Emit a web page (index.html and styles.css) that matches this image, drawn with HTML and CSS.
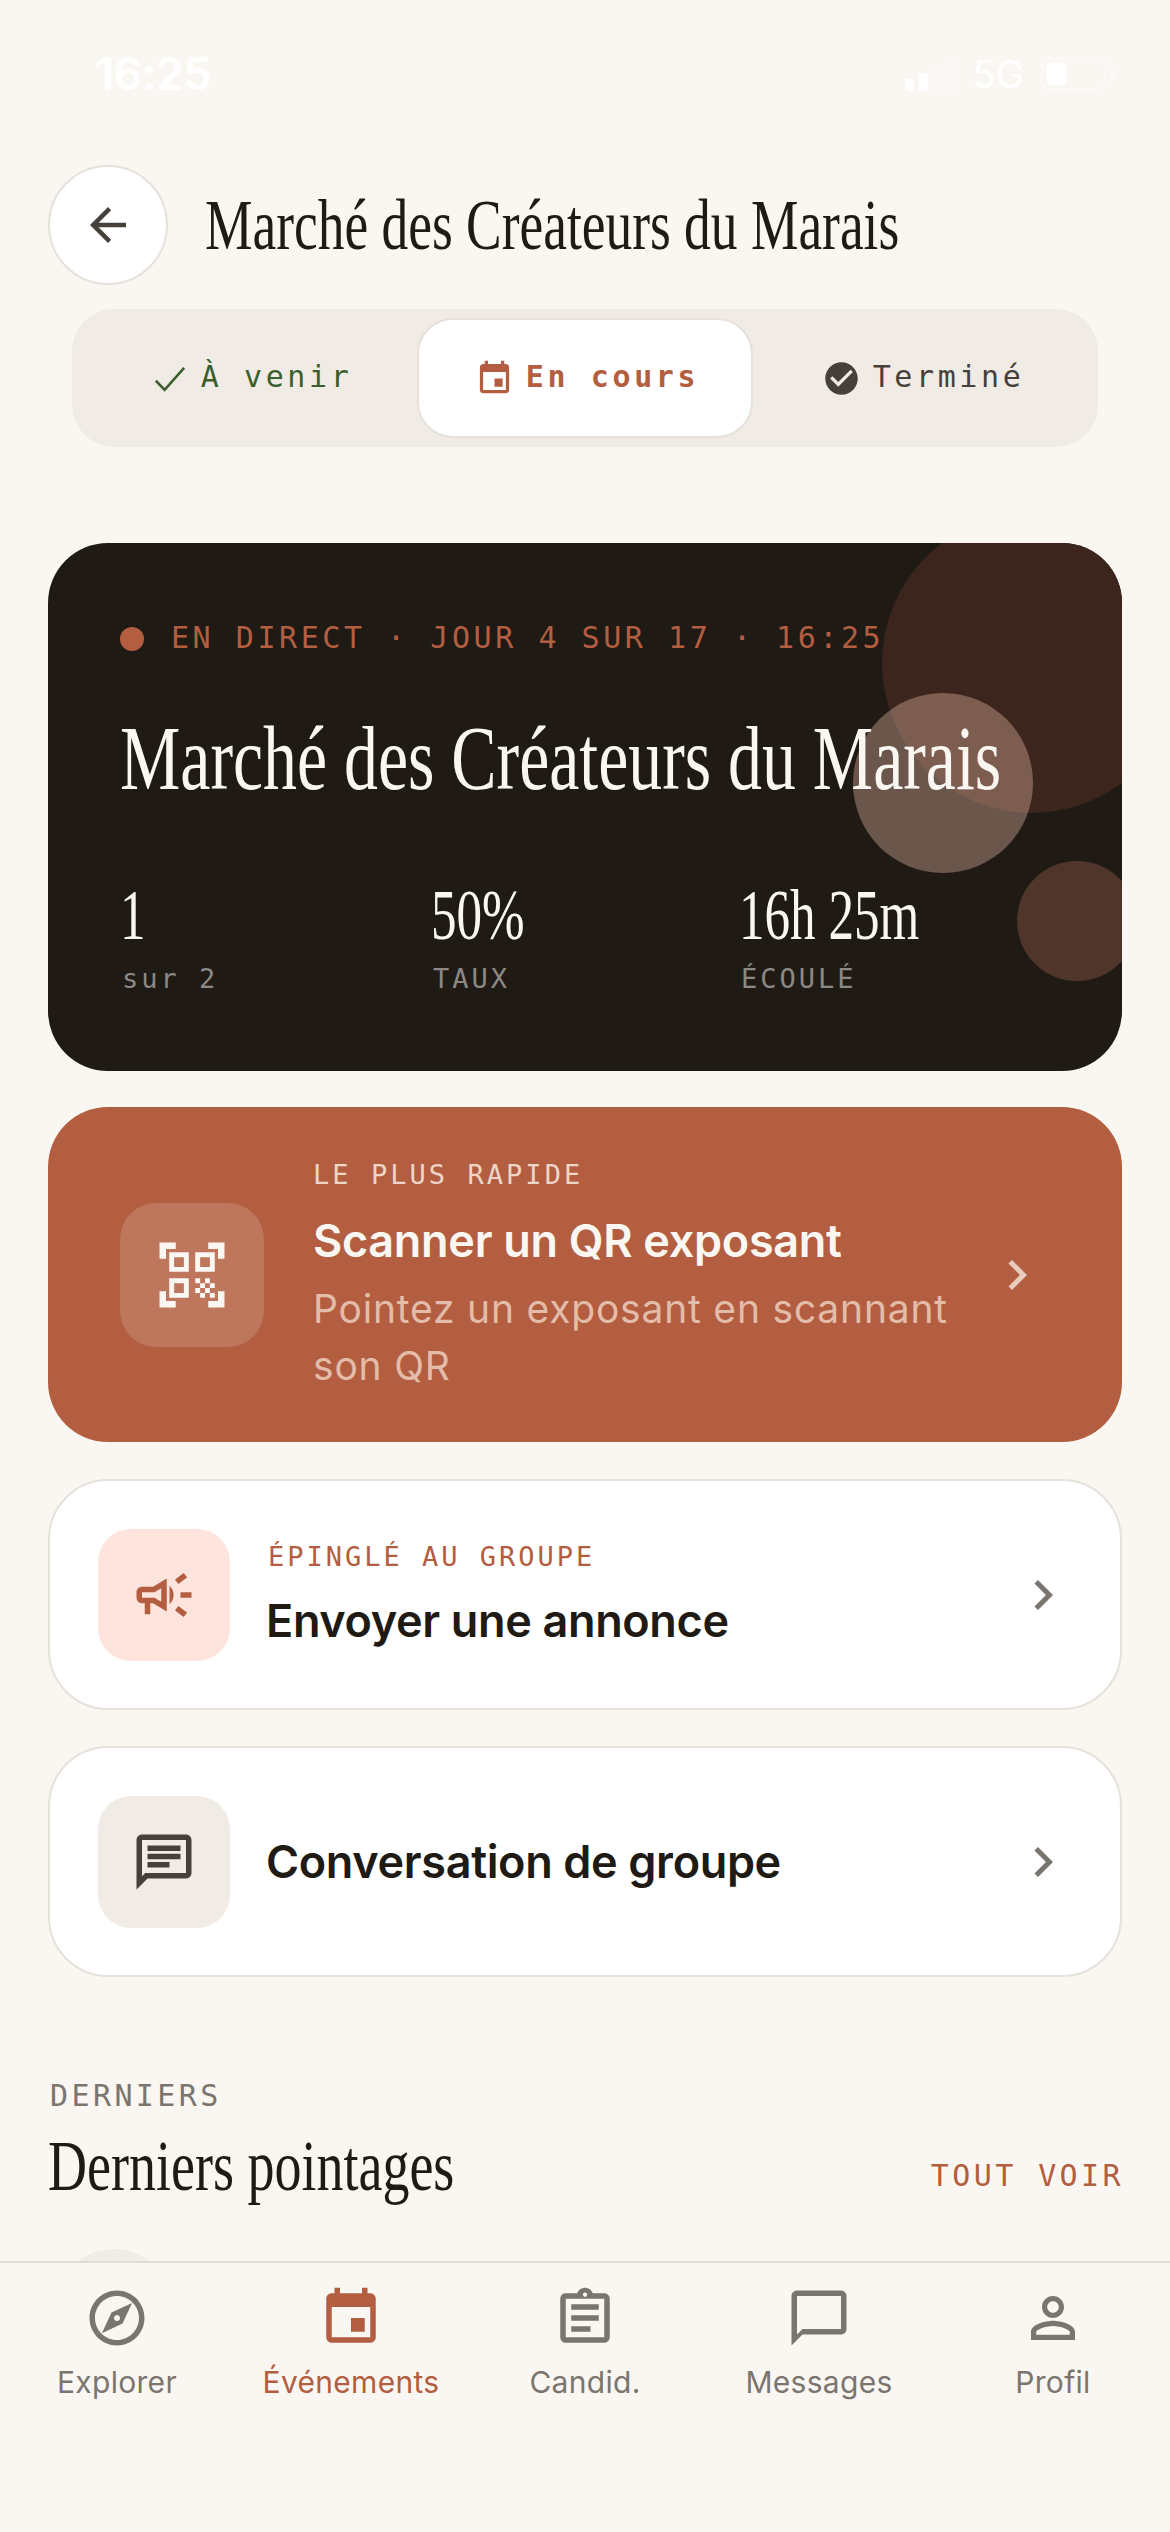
FILE: index.html
```html
<!DOCTYPE html>
<html lang="fr">
<head>
<meta charset="utf-8">
<title>Marché des Créateurs du Marais</title>
<link rel="stylesheet" href="styles.css">
</head>
<body>
<div class="screen">
  <main class="main">
    <div class="status">
      <span class="time">16:25</span>
      <div class="status-right">
        <div class="signal"><i class="b1"></i><i class="b2"></i><i class="b3"></i><i class="b4"></i></div>
        <span class="net">5G</span>
        <div class="battery"><i></i></div>
        <div class="nib"></div>
      </div>
    </div>

    <header class="header">
      <button class="back"><svg class="ic54" viewBox="0 0 24 24"><path d="M20 11H7.83l5.59-5.59L12 4l-8 8 8 8 1.41-1.41L7.83 13H20v-2z"/></svg></button>
      <h1 class="page-title"><span>Marché des Créateurs du Marais</span></h1>
    </header>

    <nav class="segment">
      <div class="seg seg-green"><svg class="ic39" viewBox="0 0 24 24"><path class="thin" d="M3.6 13.4 9 19 21 5.5"/></svg><span>À venir</span></div>
      <div class="seg seg-active"><svg class="ic39" viewBox="0 0 24 24"><path d="M17 12h-5v5h5v-5zM16 1v2H8V1H6v2H5c-1.11 0-1.99.9-1.99 2L3 19c0 1.1.89 2 2 2h14c1.1 0 2-.9 2-2V5c0-1.1-.9-2-2-2h-1V1h-2zm3 18H5V8h14v11z"/></svg><span>En cours</span></div>
      <div class="seg seg-done"><svg class="ic39" viewBox="0 0 24 24"><path d="M12 2C6.48 2 2 6.48 2 12s4.48 10 10 10 10-4.48 10-10S17.52 2 12 2zm-2 15l-5-5 1.41-1.41L10 14.17l7.59-7.59L19 8l-9 9z"/></svg><span>Terminé</span></div>
    </nav>

    <section class="hero">
      <div class="blob blob-a"></div>
      <div class="blob blob-b"></div>
      <div class="blob blob-c"></div>
      <div class="hero-body">
        <div class="live"><i class="dot"></i><span>EN DIRECT · JOUR 4 SUR 17 · 16:25</span></div>
        <h2 class="hero-title"><span>Marché des Créateurs du Marais</span></h2>
        <div class="stats">
          <div><div class="stat-val"><span>1</span></div><div class="stat-lab">sur 2</div></div>
          <div><div class="stat-val"><span>50%</span></div><div class="stat-lab">TAUX</div></div>
          <div><div class="stat-val"><span>16h 25m</span></div><div class="stat-lab">ÉCOULÉ</div></div>
        </div>
      </div>
    </section>

    <a class="scan">
      <div class="scan-tile"><svg class="ic78" viewBox="0 0 24 24"><path d="M9.5 6.5v3h-3v-3h3M11 5H5v6h6V5zm-1.5 9.5v3h-3v-3h3M11 13H5v6h6v-6zm6.5-6.5v3h-3v-3h3M19 5h-6v6h6V5zm-6 8h1.5v1.5H13V13zm1.5 1.5H16V16h-1.5v-1.5zM16 13h1.5v1.5H16V13zm-3 3h1.5v1.5H13V16zm1.5 1.5H16V19h-1.5v-1.5zM16 16h1.5v1.5H16V16zm1.5-1.5H19V16h-1.5v-1.5zm0 3H19V19h-1.5v-1.5zM22 7h-2V4h-3V2h5v5zm0 15v-5h-2v3h-3v2h5zM2 22h5v-2H4v-3H2v5zM2 2v5h2V4h3V2H2z"/></svg></div>
      <div class="scan-text">
        <div class="scan-eyebrow">LE PLUS RAPIDE</div>
        <div class="scan-title">Scanner un QR exposant</div>
        <div class="scan-sub">Pointez un exposant en scannant son QR</div>
      </div>
      <svg class="ic60 chev-light" viewBox="0 0 24 24"><path d="M10 6L8.59 7.41 13.17 12l-4.58 4.59L10 18l6-6z"/></svg>
    </a>

    <a class="card card-pin">
      <div class="tile tile-pink"><svg class="ic66" viewBox="0 0 24 24"><path d="M18 11v2h4v-2h-4zm-2 6.61c.96.71 2.21 1.65 3.2 2.39.4-.53.8-1.07 1.2-1.6-.99-.74-2.24-1.68-3.2-2.4-.4.54-.8 1.08-1.2 1.61zM20.4 5.6c-.4-.53-.8-1.07-1.2-1.6-.99.74-2.24 1.68-3.2 2.4.4.53.8 1.07 1.2 1.6.96-.72 2.21-1.65 3.2-2.4zM4 9c-1.1 0-2 .9-2 2v2c0 1.1.9 2 2 2h1v4h2v-4h1l5 3V6L8 9H4zm5.03 1.71L11 9.53v4.94l-1.97-1.18-.48-.29H4v-2h4.55l.48-.29zM15.5 12c0-1.33-.58-2.53-1.5-3.35v6.69c.92-.81 1.5-2.01 1.5-3.34z"/></svg></div>
      <div class="card-text">
        <div class="card-eyebrow">ÉPINGLÉ AU GROUPE</div>
        <div class="card-title">Envoyer une annonce</div>
      </div>
      <svg class="ic60 chev" viewBox="0 0 24 24"><path d="M10 6L8.59 7.41 13.17 12l-4.58 4.59L10 18l6-6z"/></svg>
    </a>

    <a class="card card-chat">
      <div class="tile tile-sand"><svg class="ic66" viewBox="0 0 24 24"><path d="M20 2H4c-1.1 0-2 .9-2 2v18l4-4h14c1.1 0 2-.9 2-2V4c0-1.1-.9-2-2-2zm0 14H5.17L4 17.17V4h16v12zM6 12h8v2H6zm0-3h12v2H6zm0-3h12v2H6z"/></svg></div>
      <div class="card-text">
        <div class="card-title">Conversation de groupe</div>
      </div>
      <svg class="ic60 chev" viewBox="0 0 24 24"><path d="M10 6L8.59 7.41 13.17 12l-4.58 4.59L10 18l6-6z"/></svg>
    </a>

    <section class="latest">
      <div class="latest-eyebrow">DERNIERS</div>
      <div class="latest-head">
        <h3 class="latest-title"><span>Derniers pointages</span></h3>
        <a class="see-all">TOUT VOIR</a>
      </div>
      <div class="avatar"></div>
    </section>
  </main>

  <footer class="tabbar">
    <div class="tab"><svg class="ic66" viewBox="0 0 24 24"><path d="M12 2C6.48 2 2 6.48 2 12s4.48 10 10 10 10-4.48 10-10S17.52 2 12 2zm0 18c-4.41 0-8-3.59-8-8s3.59-8 8-8 8 3.59 8 8-3.59 8-8 8zm-5.5-2.5l7.51-3.49L17.5 6.5 9.99 9.99 6.5 17.5zm5.5-6.6c.61 0 1.1.49 1.1 1.1s-.49 1.1-1.1 1.1-1.1-.49-1.1-1.1.49-1.1 1.1-1.1z"/></svg><span>Explorer</span></div>
    <div class="tab tab-active"><svg class="ic66" viewBox="0 0 24 24"><path d="M17 12h-5v5h5v-5zM16 1v2H8V1H6v2H5c-1.11 0-1.99.9-1.99 2L3 19c0 1.1.89 2 2 2h14c1.1 0 2-.9 2-2V5c0-1.1-.9-2-2-2h-1V1h-2zm3 18H5V8h14v11z"/></svg><span>Événements</span></div>
    <div class="tab"><svg class="ic66" viewBox="0 0 24 24"><path d="M7 15h7v2H7zm0-4h10v2H7zm0-4h10v2H7zm12-4h-4.18C14.4 1.84 13.3 1 12 1c-1.3 0-2.4.84-2.82 2H5c-.14 0-.27.01-.4.04-.39.08-.74.28-1.01.55-.18.18-.33.4-.43.64-.1.23-.16.49-.16.77v14c0 .27.06.54.16.78s.25.45.43.64c.27.27.62.47 1.01.55.13.02.26.03.4.03h14c1.1 0 2-.9 2-2V5c0-1.1-.9-2-2-2zm-7-.25c.41 0 .75.34.75.75s-.34.75-.75.75-.75-.34-.75-.75.34-.75.75-.75zM19 19H5V5h14v14z"/></svg><span>Candid.</span></div>
    <div class="tab"><svg class="ic66" viewBox="0 0 24 24"><path d="M20 2H4c-1.1 0-2 .9-2 2v18l4-4h14c1.1 0 2-.9 2-2V4c0-1.1-.9-2-2-2zm0 14H6l-2 2V4h16v12z"/></svg><span>Messages</span></div>
    <div class="tab"><svg class="ic66" viewBox="0 0 24 24"><path d="M12 5.9c1.16 0 2.1.94 2.1 2.1s-.94 2.1-2.1 2.1S9.9 9.16 9.9 8s.94-2.1 2.1-2.1m0 9c2.97 0 6.1 1.46 6.1 2.1v1.1H5.9V17c0-.64 3.13-2.1 6.1-2.1M12 4C9.79 4 8 5.79 8 8s1.79 4 4 4 4-1.79 4-4-1.79-4-4-4zm0 9c-2.67 0-8 1.34-8 4v3h16v-3c0-2.66-5.33-4-8-4z"/></svg><span>Profil</span></div>
  </footer>
</div>
</body>
</html>
```
FILE: styles.css
```css
* { box-sizing: border-box; margin: 0; padding: 0; }
html, body { width: 1170px; height: 2532px; overflow: hidden; background: #faf7f2; }
body { font-family: Inter, "Noto Sans", sans-serif; color: #201a15; }
svg { display: block; fill: currentColor; flex: none; }
.ic39 { width: 39px; height: 39px; }
.ic54 { width: 54px; height: 54px; }
.ic60 { width: 60px; height: 60px; }
.ic66 { width: 66px; height: 66px; }
.ic78 { width: 78px; height: 78px; }

.screen { width: 1170px; height: 2532px; display: flex; flex-direction: column; }
.main { flex: 1; min-height: 0; overflow: hidden; display: flex; flex-direction: column; }

/* status bar */
.status { height: 165px; padding: 46px 55px 0 95px; display: flex; justify-content: space-between; align-items: flex-start; color: #fff; flex: none; }
.time { font-size: 45px; font-weight: 600; line-height: 56px; letter-spacing: -0.5px; }
.status-right { display: flex; align-items: flex-end; height: 34px; margin-top: 11px; }
.signal { display: flex; align-items: flex-end; gap: 5px; width: 51px; height: 34px; }
.signal i { width: 9px; background: #fff; border-radius: 3px; display: block; }
.signal .b1 { height: 12px; }
.signal .b2 { height: 18px; }
.signal .b3 { height: 26px; opacity: .15; }
.signal .b4 { height: 34px; opacity: .15; }
.net { font-size: 38px; font-weight: 400; line-height: 34px; margin-left: 17px; margin-right: 16px; }
.battery { width: 67px; height: 34px; border: 3px solid rgba(255,255,255,.3); border-radius: 11px; padding: 2px 3px; }
.battery i { display: block; width: 21px; height: 24px; background: #fff; border-radius: 8px; }
.nib { width: 5px; height: 12px; background: rgba(255,255,255,.3); margin: 0 0 11px 3px; border-radius: 0 3px 3px 0; }

/* header */
.header { height: 120px; padding: 0 48px; display: flex; align-items: center; gap: 37px; flex: none; }
.back { width: 120px; height: 120px; flex: none; border-radius: 50%; background: #fff; border: 2px solid #e6e1db; display: flex; align-items: center; justify-content: center; color: #45403a; }
.page-title, .hero-title, .stat-val, .latest-title { font-family: "Liberation Serif", serif; font-weight: 400; white-space: nowrap; }
.page-title span, .hero-title span, .stat-val span, .latest-title span { display: inline-block; transform-origin: left center; }
.page-title { font-size: 72px; line-height: 90px; color: #201a15; min-width: 0; }
.page-title span { transform: scaleX(.742); }

/* segment */
.segment { margin: 24px 72px 0; height: 138px; padding: 9px; background: #f1ebe5; border-radius: 42px; display: grid; grid-template-columns: repeat(3, 1fr); flex: none; }
.seg { display: flex; align-items: center; justify-content: center; gap: 12px; padding-left: 4px; font-family: "DejaVu Sans Mono", monospace; font-size: 30px; letter-spacing: 3.6px; line-height: 36px; border-radius: 36px; }
.seg span { padding-bottom: 3px; }
.seg-green { color: #3b5e2d; }
.seg-active { background: #fff; border: 2px solid #e6e1db; color: #b35e40; font-weight: 700; }
.seg-done { color: #45403a; }
.thin { fill: none; stroke: currentColor; stroke-width: 1.6; }

/* hero */
.hero { margin: 96px 48px 0; height: 528px; border-radius: 60px; background: #201a15; position: relative; overflow: hidden; flex: none; }
.blob { position: absolute; border-radius: 50%; }
.blob-a { width: 300px; height: 300px; right: -60px; top: -30px; background: #3c251d; }
.blob-b { width: 180px; height: 180px; left: 805px; top: 150px; background: rgba(240,195,171,.36); }
.blob-c { width: 120px; height: 120px; left: 969px; top: 318px; background: #50362a; }
.hero-body { position: relative; padding: 78px 72px 0; color: #faf7f2; }
.live { display: flex; align-items: center; gap: 27px; height: 36px; font-family: "DejaVu Sans Mono", monospace; font-size: 30px; letter-spacing: 3.55px; color: #b35e40; white-space: nowrap; }
.live span { padding-bottom: 3px; }
.dot { width: 24px; height: 24px; border-radius: 50%; background: #b35e40; display: block; }
.hero-title { font-size: 92px; line-height: 110px; margin-top: 46px; }
.hero-title span { transform: scaleX(.737); }
.stats { display: grid; grid-template-columns: 311px 308px 1fr; margin-top: 66px; }
.stat-val { font-size: 72px; line-height: 72px; }
.stat-val span { transform: scaleX(.71); }
.stat-lab { font-family: "DejaVu Sans Mono", monospace; font-size: 27px; letter-spacing: 3px; line-height: 30px; color: #8c8985; margin-top: 13px; margin-left: 2px; }

/* scan */
.scan { margin: 36px 48px 0; height: 335px; border-radius: 60px; background: #b35e40; display: flex; align-items: center; padding: 0 75px 0 72px; color: #faf7f2; flex: none; }
.scan-tile { width: 144px; height: 144px; border-radius: 36px; background: rgba(255,255,255,.15); display: flex; align-items: center; justify-content: center; margin-right: 49px; flex: none; }
.scan-text { flex: 1; min-width: 0; }
.scan-eyebrow { font-family: "DejaVu Sans Mono", monospace; font-size: 27px; letter-spacing: 3.05px; line-height: 36px; color: #eed5c9; position: relative; top: 1px; }
.scan-title { font-size: 45px; font-weight: 600; letter-spacing: -.3px; line-height: 60px; margin-top: 19px; }
.scan-sub { font-size: 39px; letter-spacing: .8px; line-height: 57px; color: #e3bcaa; margin-top: 9px; }
.chev-light { color: #e8cdbf; margin-left: 24px; }

/* list cards */
.card { margin: 36px 48px 0; height: 231px; background: #fff; border: 2px solid #e6e1db; border-radius: 60px; display: flex; align-items: center; gap: 36px; padding: 0 47px 0 48px; flex: none; }
.card-pin { margin-top: 37px; }
.tile { width: 132px; height: 132px; border-radius: 33px; display: flex; align-items: center; justify-content: center; flex: none; }
.tile-pink { background: #fde5dd; color: #b35e40; }
.tile-sand { background: #f1ebe5; color: #45403a; }
.card-text { flex: 1; min-width: 0; }
.card-eyebrow { font-family: "DejaVu Sans Mono", monospace; font-size: 27px; letter-spacing: 3px; line-height: 36px; color: #b35e40; margin-left: 2px; margin-bottom: 16px; }
.card-title { font-size: 45px; font-weight: 600; letter-spacing: -.35px; line-height: 60px; color: #201a15; }
.chev { color: #7a756e; }

/* latest */
.latest { padding: 0 48px; flex: none; margin-top: 101px; }
.latest-eyebrow { font-family: "DejaVu Sans Mono", monospace; font-size: 30px; letter-spacing: 3.4px; line-height: 36px; color: #7a756e; margin-left: 2px; }
.latest-head { display: flex; justify-content: space-between; align-items: flex-end; margin-top: 10px; }
.latest-title { font-size: 72px; line-height: 84px; }
.latest-title span { transform: scaleX(.75); }
.see-all { font-family: "DejaVu Sans Mono", monospace; font-size: 30px; letter-spacing: 3.4px; line-height: 36px; color: #b35e40; margin-bottom: 14px; margin-right: -2px; }
.avatar { width: 120px; height: 120px; border-radius: 50%; background: #f1ece6; margin: 41px 0 0 6px; }

/* tab bar */
.tabbar { height: 271px; flex: none; border-top: 2px solid #e0dcd6; background: #faf7f2; display: grid; grid-template-columns: repeat(5, 234px); }
.tab { display: flex; flex-direction: column; align-items: center; padding-top: 22px; color: #7a756e; font-size: 30px; line-height: 40px; }
.tab span { margin-top: 11px; letter-spacing: .3px; }
.tab-active { color: #b35e40; }
```
